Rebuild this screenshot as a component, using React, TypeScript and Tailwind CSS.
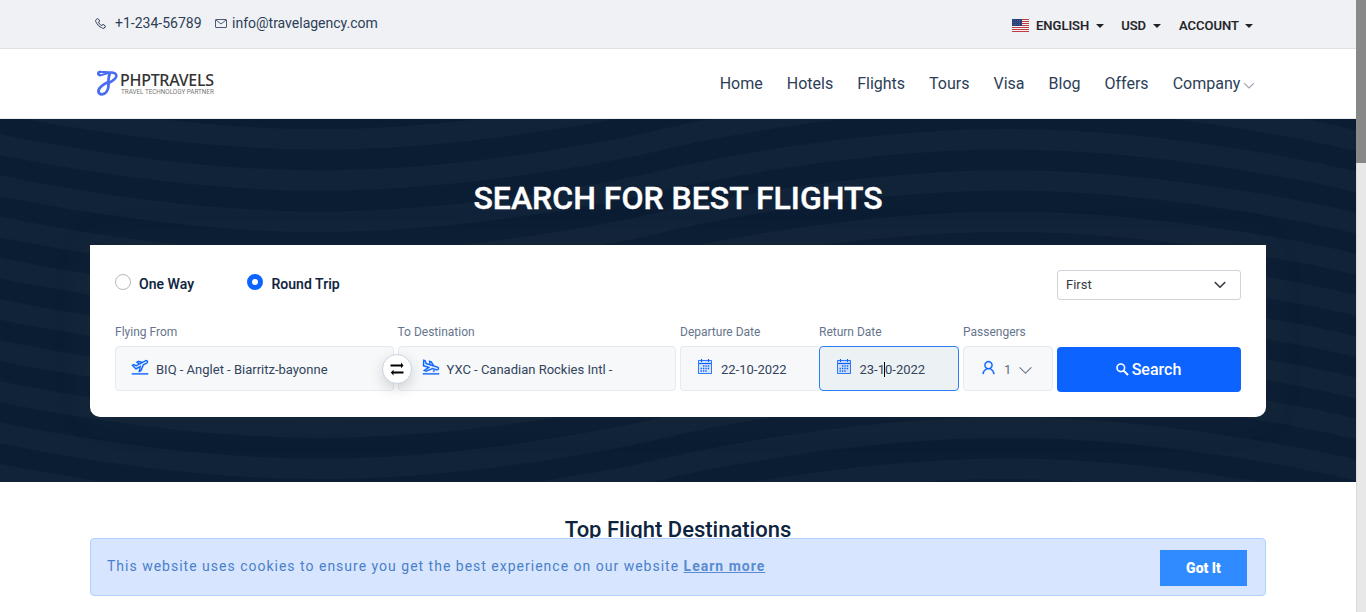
import type { ReactNode } from "react";
import {
  LiaPhoneSolid,
  LiaPlaneDepartureSolid,
  LiaPlaneArrivalSolid,
  LiaUser,
  LiaAngleDownSolid,
} from "react-icons/lia";

const NAV = ["Home", "Hotels", "Flights", "Tours", "Visa", "Blog", "Offers"];
const WAVE_ROWS = [-2, -1, 0, 1, 2, 3, 4, 5, 6, 7, 8, 9, 10];

function Caret() {
  return (
    <svg width="8" height="4" viewBox="0 0 8 4">
      <path d="M0 0h8L4 4z" fill="#1f2328" />
    </svg>
  );
}

function Flag() {
  return (
    <svg width="17" height="13" viewBox="0 0 17 13">
      <rect width="17" height="13" fill="#f4f1f4" />
      {[0, 2, 4, 6, 8, 10, 12].map((y) => (
        <rect key={y} y={y} width="17" height="1" fill="#bd3d44" />
      ))}
      <rect width="10" height="7" fill="#2b3f78" />
      <path d="M1 1.500h8M1 3.500h8M1 5.500h8" stroke="#5c6c9c" strokeWidth="0.600" strokeDasharray="1 1" />
    </svg>
  );
}

function Envelope() {
  return (
    <svg width="12" height="9" viewBox="0 0 12 9" fill="none" stroke="#4a5b72">
      <rect x="0.500" y="0.500" width="11" height="8" rx="0.500" />
      <path d="M1 1l5 4 5-4" />
    </svg>
  );
}

function CalendarIcon() {
  return (
    <svg className="mb-1 mr-[2px]" width="14" height="15" viewBox="0 0 14 15" fill="none" stroke="#0d63ff">
      <path d="M0.500 1.500h13v13H0.500z" fill="#0d63ff" fillOpacity="0.120" strokeOpacity="0.850" />
      <path d="M1 4.500h12" strokeWidth="1.200" />
      <path d="M3.500 0v3M10.500 0v3" strokeWidth="1.200" />
      <path d="M5 7h7M2.500 9.500h9.500M2.500 12h7" strokeWidth="1.400" strokeDasharray="1.400 1" />
    </svg>
  );
}

function SearchIcon() {
  return (
    <svg className="mr-[3px]" width="13" height="13" viewBox="0 0 13 13" fill="none" stroke="#fff" strokeWidth="1.600">
      <circle cx="4.800" cy="4.800" r="3.800" />
      <path d="M7.600 7.600L12 12" strokeWidth="2" />
    </svg>
  );
}

function LogoMark() {
  return (
    <svg width="21" height="26" viewBox="0 0 21 26" fill="none" stroke="#4a6cf2" strokeLinecap="round">
      <path d="M2.800 5.200C0.400 4.400 0.800 1.700 3.800 1.800c3.400 0 5.600.9 9.200.7 4-.3 7 1.200 6.200 4.100-.8 3-4.100 4.500-8 6.700" strokeWidth="2.600" />
      <path d="M3 5.200c3 .4 5.600-2 10-2.400" strokeWidth="1.800" />
      <path d="M12.600 4.500c-1.600 2.500-1 5.500-1 9.500 0 4.500-1.800 9.400-5.800 10.200-3 .5-4.800-1.400-4.200-3.800.7-3 4.200-5.600 8.600-7.800" strokeWidth="2.800" />
    </svg>
  );
}

function Waves() {
  return (
    <svg className="absolute inset-0" width="1356" height="363" viewBox="0 0 1356 363">
      <g transform="translate(-23 20.300) scale(1.373)" fill="none" stroke="#112338" strokeWidth="15">
        {WAVE_ROWS.map((r) => (
          <path
            key={r}
            transform={`translate(0 ${r * 30})`}
            d="M-250 -30c125 0 250 30 250 30s125 30 250 30s250 -30 250 -30s125 -30 250 -30s250 30 250 30s125 30 250 30"
          />
        ))}
      </g>
    </svg>
  );
}

function SwapArrows() {
  return (
    <svg width="14" height="14" viewBox="0 0 14 14" fill="#000">
      <path d="M0.500 2.500h10.500V0.500L13.500 3.500 11 6.200V4.500H0.500z" />
      <path d="M13.500 9.500H3.500V7.800L0.800 10.600 3.500 13.500v-2H13.500z" />
    </svg>
  );
}

function Field({ label, width, children, className }: { label: string; width: string; children: ReactNode; className: string }) {
  return (
    <div className={`flex flex-col ${width}`}>
      <span className="h-[22px] whitespace-nowrap pt-px text-[12px] leading-[14px] text-[#66758c]">{label}</span>
      <div className={`flex h-[45px] items-center border text-[13px] text-[#33445c] ${className}`}>{children}</div>
    </div>
  );
}

function Radio({ checked, label }: { checked?: boolean; label: string }) {
  return (
    <div className="flex w-[132.400px]">
      <span
        className={
          checked
            ? "mt-px h-4 w-4 rounded-full border-[5px] border-[#0d63ff] bg-white"
            : "mt-px h-4 w-4 rounded-full border border-[#b6b9be] bg-white"
        }
      />
      <span className="ml-2 mt-[3px] whitespace-nowrap text-[14px] font-medium leading-4 tracking-[0.050px] text-[#0d233e] [-webkit-text-stroke:0.1px_#0d233e]">{label}</span>
    </div>
  );
}

export default function App() {
  return (
    <div className="relative flex h-[612px] w-[1366px] overflow-hidden bg-white font-[Roboto,sans-serif]">
      <main className="flex w-[1356px] flex-col">
        <div className="flex h-[49px] shrink-0 justify-between border-b border-[#dfe1e7] bg-[#f0f1f5] pl-[94px] pr-[103px]">
          <div className="flex h-[46px] items-center text-[14px] text-[#2c3e57]">
            <LiaPhoneSolid className="h-[13px] w-[13px]" />
            <span className="ml-2 w-[100px]">+1-234-56789</span>
            <Envelope />
            <span className="ml-[5px]">info@travelagency.com</span>
          </div>
          <div className="flex h-[51px] items-center text-[13px] font-medium text-[#1f2328] [-webkit-text-stroke:0.15px_#1f2328]">
            <Flag />
            <span className="ml-[7px] mr-[7px]">ENGLISH</span>
            <Caret />
            <span className="ml-[17px] mr-[7px]">USD</span>
            <Caret />
            <span className="ml-[18px] mr-[6px]">ACCOUNT</span>
            <Caret />
          </div>
        </div>

        <header className="flex h-[70px] shrink-0 justify-between border-b border-[#e9eeec] pl-[97px] pr-[101px]">
          <div className="mt-[21px] flex h-[27px]">
            <LogoMark />
            <div className="ml-[2px] flex flex-col">
              <span className="mt-[2px] h-[17px] font-['Noto_Sans',sans-serif] text-[16px] font-medium leading-[17px] tracking-[-0.280px] text-[#333]">PHPTRAVELS</span>
              <span className="ml-px h-[7px] whitespace-nowrap text-[6.300px] leading-[7px] text-[#777]">TRAVEL TECHNOLOGY PARTNER</span>
            </div>
          </div>
          <nav className="flex h-[69px] items-center gap-6 text-[16px] text-[#2c3e57]">
            {NAV.map((n) => (
              <span key={n}>{n}</span>
            ))}
            <span className="-mr-[0.300px] flex items-center">
              Company
              <LiaAngleDownSolid className="ml-[3px] mt-[3px] h-3 w-3 stroke-[1px] text-[#8c97a6]" />
            </span>
          </nav>
        </header>

        <section className="relative flex h-[363px] shrink-0 flex-col items-center overflow-hidden bg-[#0b1d33]">
          <Waves />
          <h1 className="relative mt-[60px] h-[66px] text-[32px] font-medium leading-[38px] text-white [-webkit-text-stroke:0.4px_#fff]">SEARCH FOR BEST FLIGHTS</h1>
          <div className="relative h-[172px] w-[1176px] rounded-b-[10px] bg-white px-[25px] shadow-[0_0_40px_rgba(82,85,90,0.1)]">
            <div className="flex justify-between pt-[25px]">
              <div className="flex pt-[3px]">
                <Radio label="One Way" />
                <Radio label="Round Trip" checked />
              </div>
              <div className="flex h-[30px] w-[184px] items-center justify-between rounded-[3px] border border-[#ced4da] pl-2 pr-[14px] text-[13px] text-[#343a40]">
                First
                <svg width="12" height="8" viewBox="0 0 12 8" fill="none" stroke="#343a40" strokeWidth="1.600" strokeLinecap="round" strokeLinejoin="round">
                  <path d="M1.200 1.500l4.800 4.800 4.800-4.800" />
                </svg>
              </div>
            </div>
            <div className="flex pt-[24px]">
              <Field label="Flying From" width="w-[282.500px]" className="mr-[3.500px] rounded-[4px] border-[#e6ebf1] bg-[#f6f8fa] pl-[14px]">
                <LiaPlaneDepartureSolid className="mb-1 h-5 w-5 stroke-[0.3px] text-[#0d63ff]" />
                <span className="ml-[6px] mt-[2px]">BIQ - Anglet - Biarritz-bayonne</span>
              </Field>
              <Field label="To Destination" width="w-[282.500px]" className="mr-[4px] rounded-[4px] border-[#e6ebf1] bg-[#f6f8fa] pl-[22px]">
                <LiaPlaneArrivalSolid className="mb-1 h-5 w-5 stroke-[0.3px] text-[#0d63ff]" />
                <span className="ml-[6px] mt-[2px]">YXC - Canadian Rockies Intl -</span>
              </Field>
              <Field label="Departure Date" width="w-[139px]" className="rounded-l-[4px] border-r-0 border-[#e6ebf1] bg-[#f6f8fa] pl-[17px]">
                <CalendarIcon />
                <span className="ml-[7px] mt-[2px]">22-10-2022</span>
              </Field>
              <Field label="Return Date" width="w-[144px]" className="mr-1 rounded-[4px] border-[#2d7ff9] bg-[#ecf1f4] pl-[17px]">
                <CalendarIcon />
                <span className="relative ml-[6.500px] mt-[2px]">
                  23-10-2022
                  <i className="absolute left-[24.500px] top-[2px] h-[15px] w-px bg-black" />
                </span>
              </Field>
              <Field label="Passengers" width="w-[90px]" className="rounded-[4px] border-[#e6ebf1] bg-[#f6f8fa] pl-[15px]">
                <LiaUser className="mb-[2px] h-[19px] w-[19px] stroke-[0.5px] text-[#0d63ff]" />
                <span className="ml-[6px] mt-[2px] text-[#5d6b7f]">1</span>
                <LiaAngleDownSolid className="ml-[7px] mt-[2px] h-[15px] w-[15px] text-[#5d6b7f]" />
              </Field>
              <button className="ml-1 mt-[23px] flex h-[45px] w-[184px] items-center justify-center rounded-[4px] bg-[#0d63ff] text-[16px] font-medium text-white">
                <SearchIcon />
                <span className="mr-px">Search</span>
              </button>
            </div>
            <div className="absolute left-[292px] top-[109px] flex h-[30px] w-[30px] items-center justify-center rounded-full border border-[#c9d5e2] bg-white shadow-[0_5px_14px_rgba(0,0,0,0.16)]">
              <SwapArrows />
            </div>
          </div>
        </section>

        <h2 className="mt-[35px] text-center text-[22px] font-medium leading-[26px] text-[#0d233e]">Top Flight Destinations</h2>
      </main>

      <aside className="h-full w-[10px] border-l border-[#d8d8d8] bg-[#e8e8e8]">
        <div className="-ml-px h-[163px] w-[10px] bg-[#888]" />
      </aside>

      <div className="absolute left-[90px] top-[538px] flex h-[58px] w-[1176px] items-center justify-between rounded-[4px] border border-[#b2d0ff] bg-[#d7e6fe] pl-4 pr-[18px]">
        <p className="mb-[1px] text-[14px] tracking-[1px] text-[#4a7fca]">
          This website uses cookies to ensure you get the best experience on our website{" "}
          <a className="font-bold text-[#5a8bd2] underline">Learn more</a>
        </p>
        <button className="mt-[1px] h-9 w-[87px] bg-[#2f8bff] pt-px text-[14px] font-black text-white">Got It</button>
      </div>
    </div>
  );
}
